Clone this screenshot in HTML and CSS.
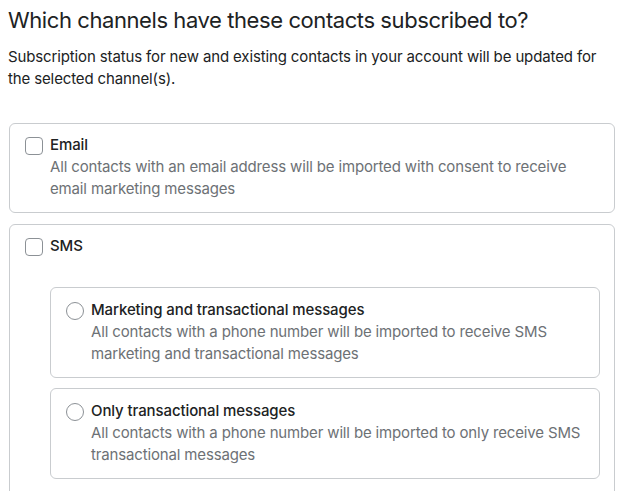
FILE: index.html
```html
<!DOCTYPE html>
<html>
<head>
<meta charset="utf-8">
<link rel="stylesheet" href="styles.css">
</head>
<body>
<div class="page">
  <h1 class="title">Which channels have these contacts subscribed to?</h1>
  <p class="intro">Subscription status for new and existing contacts in your account will be updated for the selected channel(s).</p>

  <div class="card">
    <div class="option">
      <span class="checkbox"></span>
      <div class="option-text">
        <div class="label">Email</div>
        <div class="desc">All contacts with an email address will be imported with consent to receive email marketing messages</div>
      </div>
    </div>
  </div>

  <div class="card sms">
    <div class="option">
      <span class="checkbox"></span>
      <div class="option-text">
        <div class="label">SMS</div>
      </div>
    </div>
    <div class="suboptions">
      <div class="subcard">
        <div class="option">
          <span class="radio"></span>
          <div class="option-text">
            <div class="label">Marketing and transactional messages</div>
            <div class="desc">All contacts with a phone number will be imported to receive SMS marketing and transactional messages</div>
          </div>
        </div>
      </div>
      <div class="subcard">
        <div class="option">
          <span class="radio"></span>
          <div class="option-text">
            <div class="label">Only transactional messages</div>
            <div class="desc">All contacts with a phone number will be imported to only receive SMS transactional messages</div>
          </div>
        </div>
      </div>
    </div>
  </div>
</div>
</body>
</html>
```

FILE: styles.css
```css
* { box-sizing: border-box; }
html, body { margin: 0; padding: 0; background: #fff; }
body {
  font-family: Inter, "Noto Sans", sans-serif;
  color: #202223;
}
.page {
  padding: 5px 9px 0 9px;
}
.title {
  margin: 0 0 0 -1px;
  font-size: 22px;
  font-weight: 400;
  line-height: 30px;
  color: #202223;
  letter-spacing: -0.42px;
}
.intro {
  margin: 11px 0 0 -1px;
  font-size: 15px;
  line-height: 22px;
  color: #202223;
  letter-spacing: -0.13px;
}
.card {
  margin-top: 33px;
  border: 1px solid #c9cccf;
  border-radius: 6px;
  padding: 10px 14px 12px 15px;
}
.card.sms {
  margin-top: 11px;
  padding-bottom: 20px;
}
.option {
  display: flex;
  align-items: flex-start;
  gap: 7px;
}
.checkbox {
  flex: none;
  width: 18px;
  height: 18px;
  margin-top: 3px;
  border: 1.5px solid #8c9196;
  border-radius: 4px;
  background: #fff;
}
.radio {
  flex: none;
  width: 18px;
  height: 18px;
  margin-top: 3px;
  border: 1.5px solid #8c9196;
  border-radius: 50%;
  background: #fff;
}
.label {
  font-size: 15px;
  line-height: 22px;
  font-weight: 500;
  color: #202223;
  letter-spacing: -0.1px;
}
.desc {
  font-size: 15px;
  line-height: 22px;
  color: #6d7175;
  letter-spacing: -0.15px;
}
.suboptions {
  margin: 30px 0 0 25px;
  display: flex;
  flex-direction: column;
  gap: 10px;
}
.subcard {
  border: 1px solid #c9cccf;
  border-radius: 6px;
  padding: 11px 14px 12px 15px;
}
```
